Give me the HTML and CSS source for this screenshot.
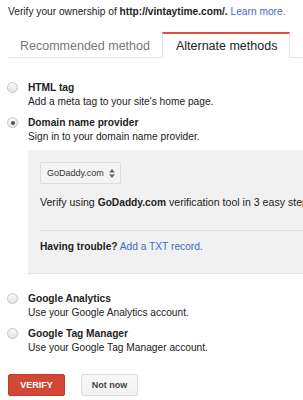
FILE: index.html
```html
<!DOCTYPE html>
<html>
<head>
<meta charset="utf-8">
<link rel="stylesheet" href="styles.css">
</head>
<body>
<div class="page">
  <p class="intro">Verify your ownership of <b>http://vintaytime.com/.</b> <a class="link" href="#">Learn more.</a></p>
  <div class="tabs">
    <div class="tab">Recommended method</div>
    <div class="tab active">Alternate methods</div>
    <div class="tab-fill"></div>
  </div>
  <div class="options">
    <div class="option">
      <span class="radio"></span>
      <div class="opt-text">
        <div class="opt-title">HTML tag</div>
        <div class="opt-desc">Add a meta tag to your site's home page.</div>
      </div>
    </div>
    <div class="option">
      <span class="radio checked"></span>
      <div class="opt-text">
        <div class="opt-title">Domain name provider</div>
        <div class="opt-desc">Sign in to your domain name provider.</div>
      </div>
    </div>
    <div class="panel">
      <div class="select">GoDaddy.com <span class="arrows"><svg width="6" height="9" viewBox="0 0 6 9"><path d="M3 0 L6 3.6 L0 3.6 Z M0 5.4 L6 5.4 L3 9 Z" fill="#666"/></svg></span></div>
      <div class="panel-line first">Verify using <b>GoDaddy.com</b> verification tool in 3 easy steps.</div>
      <div class="panel-sep"></div>
      <div class="panel-line"><b>Having trouble?</b> <a class="link" href="#">Add a TXT record.</a></div>
    </div>
    <div class="option">
      <span class="radio"></span>
      <div class="opt-text">
        <div class="opt-title">Google Analytics</div>
        <div class="opt-desc">Use your Google Analytics account.</div>
      </div>
    </div>
    <div class="option">
      <span class="radio"></span>
      <div class="opt-text">
        <div class="opt-title">Google Tag Manager</div>
        <div class="opt-desc">Use your Google Tag Manager account.</div>
      </div>
    </div>
  </div>
  <div class="actions">
    <button class="btn btn-primary">VERIFY</button>
    <button class="btn btn-secondary">Not now</button>
  </div>
</div>
</body>
</html>
```
FILE: styles.css
```css
* { box-sizing: border-box; }
html, body { margin: 0; padding: 0; background: #fff; }
body { font-family: "Liberation Sans", Arial, sans-serif; color: #222; font-size: 10.2px; overflow: hidden; }
.page { padding: 5px 0 0 8px; width: 303px; }
.intro { margin: 0; line-height: 13px; font-size: 10.2px; color: #222; white-space: nowrap; }
.intro b { font-weight: bold; }
.link { color: #3b6bc6; text-decoration: none; }
.tabs { display: flex; margin-top: 14px; height: 26px; }
.tab { font-size: 12.5px; line-height: 15px; color: #777; padding: 7px 12px 0; border-bottom: 1px solid #e3e3e3; white-space: nowrap; }
.tab.active { color: #222; border: 1px solid #e3e3e3; border-top: 2px solid #dd4b39; border-bottom: 1px solid #fff; padding: 5px 12px 0 13px; }
.tab-fill { flex: 1; border-bottom: 1px solid #e3e3e3; }
.options { margin-top: 22px; }
.option { display: flex; align-items: flex-start; margin-bottom: 6px; }
.radio { width: 11px; height: 11px; border-radius: 50%; border: 1px solid #c4c4c4; background: linear-gradient(#fafafa, #e4e4e4); margin: 2px 10px 0 -1px; flex: none; position: relative; }
.radio.checked::after { content: ""; position: absolute; left: 2.5px; top: 2.5px; width: 4px; height: 4px; border-radius: 50%; background: #555; }
.opt-title { font-weight: bold; line-height: 15px; color: #222; }
.opt-desc { line-height: 14px; color: #222; }
.panel { margin: 4px 0 17px 20px; background: #f1f1f1; border-bottom: 1px solid #e2e2e2; padding: 12px 0 19px 12px; white-space: nowrap; overflow: hidden; }
.select { display: inline-flex; align-items: center; height: 22px; padding: 0 5px 0 6px; border: 1px solid #dcdcdc; background: #f3f3f3; border-radius: 2px; font-size: 9px; color: #333; }
.arrows { margin-left: 5px; display: inline-flex; }
.panel-line { line-height: 14px; color: #222; }
.panel-line.first { margin-top: 11px; font-size: 10.6px; }
.panel-line.first b { font-size: 10.2px; }
.panel-sep { border-top: 1px solid #e0e0e0; margin: 20px 0 9px; }
.actions { display: flex; gap: 16px; margin-top: 19px; }
.btn { font-family: "Liberation Sans", Arial, sans-serif; font-size: 9px; font-weight: bold; height: 22px; border-radius: 2px; padding: 0; width: 57px; }
.btn-primary { background: #d14836; border: 1px solid #c53727; color: #fff; }
.btn-secondary { background: linear-gradient(#f8f8f8, #f1f1f1); border: 1px solid #dcdcdc; color: #444; }
```
